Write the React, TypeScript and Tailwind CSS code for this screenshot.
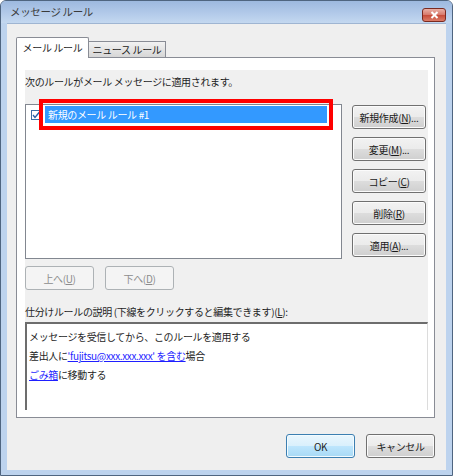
import React from "react";

const btn =
  "h-[24px] rounded-[3px] border border-[#707070] bg-[linear-gradient(#f2f2f2,#ebebeb_50%,#dddddd_50%,#cfcfcf)] shadow-[inset_0_0_0_1px_#fbfbfb] text-[10px] text-[#1a1a1a] flex items-center justify-center";

const disabledBtn =
  "h-[24px] w-[69px] rounded-[3px] border border-[#adb2b5] bg-[#f4f4f4] text-[10px] text-[#8c8c8c] flex items-center justify-center";

const Mn = ({ c }: { c: string }) => <span className="underline">{c}</span>;

const Checkbox = () => (
  <svg width="10" height="10" viewBox="0 0 10 10" className="shrink-0">
    <rect x="0.5" y="0.5" width="9" height="9" fill="#fff" stroke="#3d6fa5" />
    <path d="M2 5 L4 7.5 L8.5 2" fill="none" stroke="#2a5fa8" strokeWidth="1.4" />
  </svg>
);

const App = () => {
  const sideButtons = [
    { label: "新規作成(", key: "N", tail: ")..." },
    { label: "変更(", key: "M", tail: ")..." },
    { label: "コピー(", key: "C", tail: ")" },
    { label: "削除(", key: "R", tail: ")" },
    { label: "適用(", key: "A", tail: ")..." },
  ];

  return (
    <div className="w-[453px] h-[476px] flex flex-col border border-[#4f6580] rounded-t-[6px] bg-[#bdd3ee] font-['Noto_Sans_CJK_JP','Noto_Sans',sans-serif] tracking-[-0.35px] text-[#1e1e1e] overflow-hidden">
      {/* Title bar */}
      <div className="h-[22px] shrink-0 flex items-start justify-between pl-[9px] pr-[6px] bg-[linear-gradient(#9db9df,#b4cbea_60%,#c4d8f0)]">
        <span className="text-[10.5px] text-[#3a3a3a] leading-[22px]">メッセージ ルール</span>
        <div className="mt-[7px] w-[24px] h-[14px] rounded-[3px] border border-[#7a2a20] bg-[linear-gradient(#eab0a6,#d7786a_50%,#c64a38_50%,#dc7c68)] flex items-center justify-center">
          <svg width="9" height="8" viewBox="0 0 9 8">
            <path d="M1.5 1 L7.5 7 M7.5 1 L1.5 7" stroke="#fff" strokeWidth="2" />
          </svg>
        </div>
      </div>

      {/* Client area */}
      <div className="flex-1 mx-[6px] mb-[5px] bg-[#efefef] border-t border-[#9fb5d2] flex flex-col pt-[13px] pl-[9px] pr-[11px]">
        {/* Tabs */}
        <div className="flex items-end h-[20px]">
          <div className="h-[21px] w-[73px] -mb-px z-10 bg-white border border-b-0 border-[#898c95] rounded-t-[2px] text-[10px] leading-[20px] text-center">
            メール ルール
          </div>
          <div className="h-[16px] w-[77px] bg-[linear-gradient(#f2f2f2,#e4e4e4_50%,#d6d6d6)] border border-l-0 border-b-0 border-[#898c95] text-[10px] leading-[15px] text-[#222] text-center">
            ニュース ルール
          </div>
        </div>

        {/* Tab panel */}
        <div className="h-[361px] bg-white border border-[#898c95] pt-[12px] pl-[8px] pr-[6px] pb-[7px]">
          <div className="h-full bg-[#f0f0f0] flex flex-col">
            <div className="h-[22px] flex items-center text-[10px]">
              次のルールがメール メッセージに適用されます。
            </div>

            <div className="mt-[12px] flex gap-[10px]">
              <div className="relative w-[317px] h-[155px] bg-white border border-[#828790]">
                <div className="flex items-center pt-[1px] pl-[5px] gap-[4px]">
                  <Checkbox />
                  <div className="w-[282px] h-[17px] bg-[#3399ff] text-white text-[10px] leading-[17px] pl-[3px]">
                    新規のメール ルール #1
                  </div>
                </div>
                <div className="absolute left-[13px] top-[-6px] w-[294px] h-[31px] border-[4px] border-[#ff0000] pointer-events-none" />
              </div>
              <div className="mt-[1px] flex flex-col gap-[8px]">
                {sideButtons.map((b) => (
                  <div key={b.key} className={`${btn} w-[74px]`}>
                    {b.label}
                    <Mn c={b.key} />
                    {b.tail}
                  </div>
                ))}
              </div>
            </div>

            <div className="mt-[7px] flex gap-[11px]">
              <div className={disabledBtn}>
                上へ(<Mn c="U" />)
              </div>
              <div className={disabledBtn}>
                下へ(<Mn c="D" />)
              </div>
            </div>

            <div className="mt-[11px] h-[21px] flex items-center text-[10px]">
              仕分けルールの説明 (下線をクリックすると編集できます)(<Mn c="L" />):
            </div>

            <div className="flex-1 bg-white border-t-2 border-l-2 border-r border-[#6d6d6d] border-r-[#dcdcdc] pl-[2px] pt-[3px] text-[10px] leading-[19px]">
              <div>メッセージを受信してから、このルールを適用する</div>
              <div>
                差出人に
                <span className="text-[#1f1fff] underline">'fujitsu@xxx.xxx.xxx' を含む</span>
                場合
              </div>
              <div>
                <span className="text-[#1f1fff] underline">ごみ箱</span>
                に移動する
              </div>
            </div>
          </div>
        </div>

        {/* Footer */}
        <div className="mt-[16px] flex justify-end gap-[11px]">
          <div className="h-[24px] w-[69px] rounded-[3px] border border-[#3c7fb1] bg-[linear-gradient(#eaf6fd,#d9f0fc_50%,#bee6fd_50%,#a7d9f5)] shadow-[inset_0_0_0_1px_#f2fbff] text-[10px] flex items-center justify-center">
            OK
          </div>
          <div className={`${btn} w-[69px]`}>キャンセル</div>
        </div>
      </div>
    </div>
  );
};

export default App;
